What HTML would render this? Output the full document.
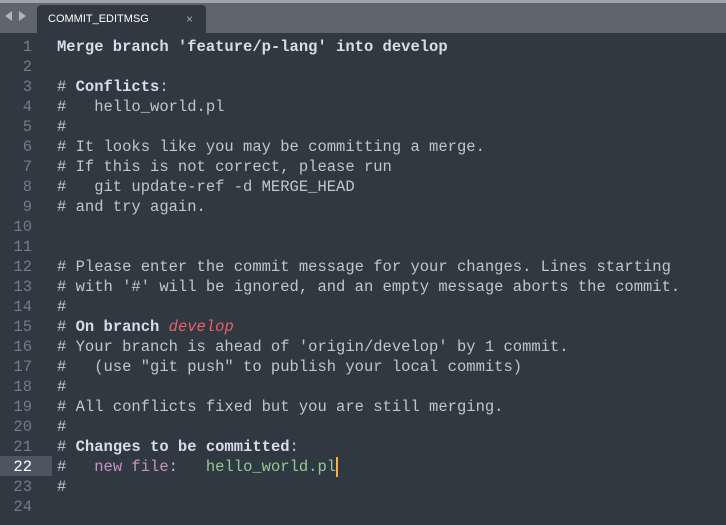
<!DOCTYPE html>
<html><head><style>
body{margin:0;width:726px;height:525px;background:#303841;overflow:hidden;position:relative;font-family:"Liberation Mono",monospace;}
.bar{position:absolute;left:0;top:0;width:726px;height:33px;background:#5e656c;border-top:3px solid #a0a4a8;box-sizing:border-box;}
.tab{position:absolute;left:37px;top:5px;width:169px;height:28px;background:#303841;border-radius:4px 4px 0 0;color:#fff;font:11px "Liberation Sans",sans-serif;}
.tab span{position:absolute;left:11px;top:8px;}
.tab b{position:absolute;left:149px;top:7px;font-weight:normal;color:#9aa;font-size:12px}
.arr{position:absolute;top:11px;width:0;height:0;border-top:5px solid transparent;border-bottom:5px solid transparent;}
.g{position:absolute;left:0;width:32px;text-align:right;color:#737d88;font-size:15.5px;line-height:20px}
.l{position:absolute;left:57px;color:#c0c5ce;font-size:15.5px;line-height:20px;white-space:pre}
.hl{position:absolute;left:0;top:456px;width:52px;height:20px;background:#4b5662}
.k{font-weight:bold;color:#d8dee9}
.r{color:#ec5f67;font-style:italic}
.p{color:#c594c5}.gr{color:#99c794}
.cur{display:inline-block;width:2px;height:20px;background:#f9ae58;vertical-align:top}
</style></head><body>
<div class="bar"></div>
<div class="arr" style="left:5px;border-right:7px solid #b0b4b8"></div>
<div class="arr" style="left:19px;border-left:7px solid #b0b4b8"></div>
<div class="tab"><span>COMMIT_EDITMSG</span><b>×</b></div>
<div class="hl"></div>
<div class="g" style="top:37px">1<br>2<br>3<br>4<br>5<br>6<br>7<br>8<br>9<br>10<br>11<br>12<br>13<br>14<br>15<br>16<br>17<br>18<br>19<br>20<br>21<br><span style="color:#fff">22</span><br>23<br>24</div>
<div class="l" style="top:37px"><span class="k">Merge branch 'feature/p-lang' into develop</span>

# <span class="k">Conflicts</span>:
#   hello_world.pl
#
# It looks like you may be committing a merge.
# If this is not correct, please run
#   git update-ref -d MERGE_HEAD
# and try again.


# Please enter the commit message for your changes. Lines starting
# with '#' will be ignored, and an empty message aborts the commit.
#
# <span class="k">On branch</span> <span class="r">develop</span>
# Your branch is ahead of 'origin/develop' by 1 commit.
#   (use "git push" to publish your local commits)
#
# All conflicts fixed but you are still merging.
#
# <span class="k">Changes to be committed</span>:
#   <span class="p">new file</span>:   <span class="gr">hello_world.pl</span><span class="cur"></span>
#
</div>
</body></html>
